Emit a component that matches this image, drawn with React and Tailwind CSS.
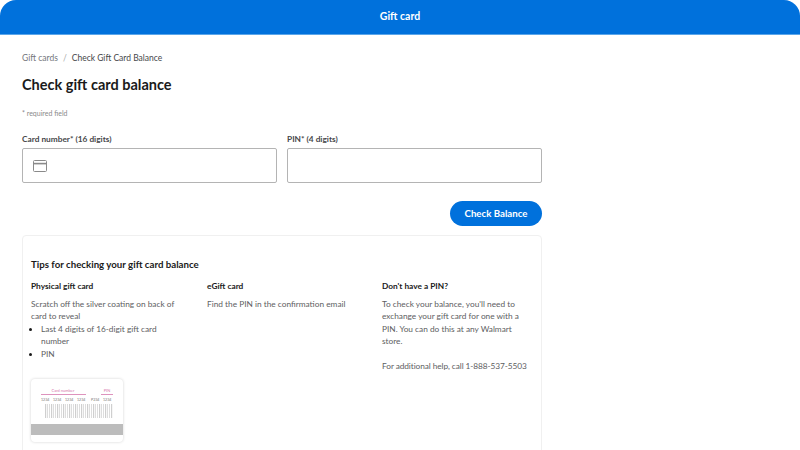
import React from "react";

function GiftCardPicture() {
  const bars = [];
  for (let i = 0; i < 34; i++) {
    bars.push(<rect key={i} x={14 + i * 2} y="25" width={i % 3 === 0 ? 1.2 : 0.7} height="14" fill="#cfcfcf" />);
  }

  return (
    <div className="w-[92px] h-[63px] rounded-[4px] bg-white shadow-[0_0_3px_rgba(0,0,0,0.18)] overflow-hidden">
      <svg width="92" height="63" viewBox="0 0 92 63">
        <text x="32" y="13" fontSize="4" fill="#d678ad" textAnchor="middle" fontFamily="Lato">Card number</text>
        <text x="76" y="13" fontSize="4" fill="#d678ad" textAnchor="middle" fontFamily="Lato">PIN</text>
        <rect x="10" y="15" width="45" height="0.8" fill="#d678ad" />
        <rect x="70" y="15" width="12" height="0.8" fill="#d678ad" />
        <text x="10" y="22" fontSize="3.6" fill="#777" fontFamily="Lato">1234</text>
        <text x="22" y="22" fontSize="3.6" fill="#777" fontFamily="Lato">1234</text>
        <text x="34" y="22" fontSize="3.6" fill="#777" fontFamily="Lato">1234</text>
        <text x="46" y="22" fontSize="3.6" fill="#777" fontFamily="Lato">1234</text>
        <text x="60" y="22" fontSize="3.6" fill="#777" fontFamily="Lato">P234</text>
        <text x="72" y="22" fontSize="3.6" fill="#777" fontFamily="Lato">1234</text>
        {bars}
        <rect x="0" y="45" width="92" height="11" fill="#bcbcbc" />
      </svg>
    </div>
  );
}

export default function App() {
  return (
    <div className="w-[800px] h-[450px] overflow-hidden bg-white font-['Lato',sans-serif] text-[#2e2f32]">

      {/* Header */}
      <div className="h-[35px] bg-[#0071dc] rounded-t-[16px] border-b border-[#5ba6ea] flex items-center justify-center">
        <span className="text-white text-[10.5px] font-bold">Gift card</span>
      </div>

      <div className="w-[520px] ml-[22px]">

        {/* Breadcrumb */}
        <div className="mt-[17px] h-[12px] flex items-center text-[8.5px] leading-[12px]">
          <span className="text-[#74767c]">Gift cards</span>
          <span className="text-[#aaa] mx-[5px]">/</span>
          <span className="text-[#46474a]">Check Gift Card Balance</span>
        </div>

        <h1 className="mt-[11px] text-[14.5px] leading-[20px] font-bold text-[#1a1a1a]">
          Check gift card balance
        </h1>

        <p className="mt-[13px] text-[7px] leading-[10px] text-[#8a8a8a]">* required field</p>

        {/* Form */}
        <div className="mt-[15px] grid grid-cols-2 gap-[10px]">
          <div>
            <label className="block text-[8.3px] leading-[12px] font-bold text-[#46474a] mb-[3px]">
              Card number* (16 digits)
            </label>
            <div className="h-[35px] border border-[#b4b4b4] rounded-[2px] flex items-center pl-[10px]">
              <svg width="14" height="12" viewBox="0 0 14 12" fill="none">
                <rect x="0.5" y="0.5" width="13" height="11" rx="1" stroke="#8a8a8a" />
                <rect x="0.5" y="2.8" width="13" height="1.6" fill="#8a8a8a" />
              </svg>
            </div>
          </div>
          <div>
            <label className="block text-[8.3px] leading-[12px] font-bold text-[#46474a] mb-[3px]">
              PIN* (4 digits)
            </label>
            <div className="h-[35px] border border-[#b4b4b4] rounded-[2px]"></div>
          </div>
        </div>

        <div className="mt-[18px] flex justify-end">
          <button className="w-[92px] h-[25px] rounded-full bg-[#0071dc] text-white text-[9.7px] font-bold">
            Check Balance
          </button>
        </div>

        {/* Tips */}
        <div className="mt-[9px] h-[240px] rounded-[4px] border border-[#f0f0f0] px-[8px] pt-[21px]">
          <h2 className="text-[9.7px] leading-[14px] font-bold text-[#1a1a1a]">
            Tips for checking your gift card balance
          </h2>

          <div className="mt-[9px] grid grid-cols-[176px_175px_1fr] text-[8.3px] leading-[12.5px] text-[#5d5e62]">
            <div>
              <h3 className="font-bold text-[#1a1a1a] mb-[5px]">Physical gift card</h3>
              <p className="w-[150px]">Scratch off the silver coating on back of card to reveal</p>
              <ul className="w-[130px] list-disc pl-[10px] marker:text-[#1a1a1a]">
                <li>Last 4 digits of 16-digit gift card number</li>
                <li>PIN</li>
              </ul>
              <div className="mt-[19px]">
                <GiftCardPicture />
              </div>
            </div>
            <div>
              <h3 className="font-bold text-[#1a1a1a] mb-[5px]">eGift card</h3>
              <p>Find the PIN in the confirmation email</p>
            </div>
            <div>
              <h3 className="font-bold text-[#1a1a1a] mb-[5px]">Don't have a PIN?</h3>
              <p className="w-[145px]">To check your balance, you'll need to exchange your gift card for one with a PIN. You can do this at any Walmart store.</p>
              <p className="mt-[12px] whitespace-nowrap tracking-[-0.08px]">For additional help, call 1-888-537-5503</p>
            </div>
          </div>
        </div>

      </div>
    </div>
  );
}
